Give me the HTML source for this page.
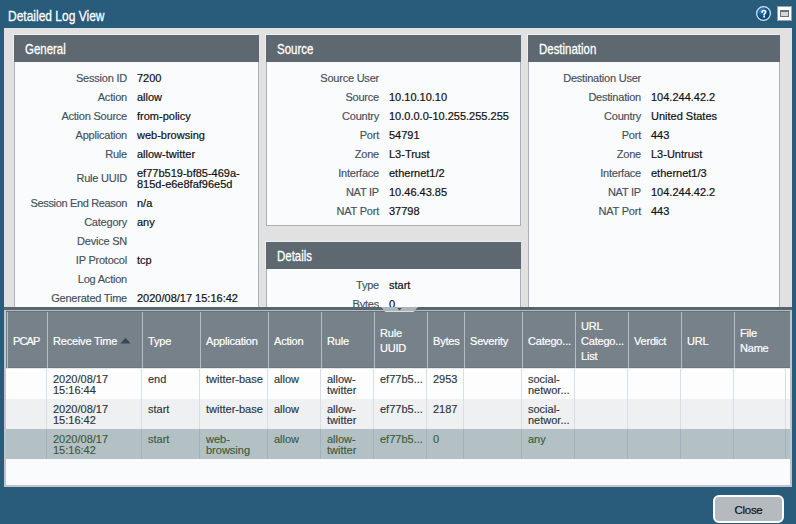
<!DOCTYPE html><html><head><meta charset="utf-8"><style>
*{box-sizing:border-box;margin:0;padding:0}
html,body{width:796px;height:524px;overflow:hidden}
body{background:#285c7a;font-family:"Liberation Sans",sans-serif;font-size:11px;position:relative}
.a{position:absolute;white-space:nowrap}
.title{position:absolute;left:8px;top:6px;color:#fff;font-size:15px;line-height:20px;transform:scaleX(0.8);transform-origin:0 0;white-space:nowrap;-webkit-text-stroke:0.3px #fff}
.content{position:absolute;left:4px;top:28px;width:788px;height:279px;background:#e1e1e1}
.ph{position:absolute;height:27px;background:#5d6870;box-shadow:-1px -1px 0 #efefef}
.ph span{position:absolute;left:11px;top:5px;color:#fff;font-size:14.5px;line-height:18px;transform:scaleX(0.79);transform-origin:0 0;white-space:nowrap;-webkit-text-stroke:0.3px #fff}
.pb{position:absolute;background:#fafbfd;border:1px solid #aab0b5;border-top:none}
.lb{position:absolute;text-align:right;color:#445059;-webkit-text-stroke:0.15px #445059;letter-spacing:-0.22px;line-height:13px;white-space:nowrap}
.vl{position:absolute;color:#111;-webkit-text-stroke:0.2px #111;line-height:13px;white-space:nowrap}
.vl2{position:absolute;color:#111;-webkit-text-stroke:0.2px #111;line-height:10.5px;white-space:nowrap}
.splitter{position:absolute;left:4px;top:307px;width:788px;height:3px;background:#58656d}
.grid{position:absolute;left:4px;top:310px;width:788px;height:177px;background:#fafbfd;border:2px solid #c1c5cb;border-top:1px solid #b7bcc4}
.th{position:absolute;top:312px;height:56px;color:#fff;border-left:1px solid #b6bcc3;line-height:15px;padding:2px 0 0 5px;letter-spacing:-0.2px;-webkit-text-stroke:0.2px #fff;display:flex;align-items:center;white-space:nowrap}
.thbg{position:absolute;left:6px;top:311px;width:784px;height:58px;background:#76818a;border-bottom:1px solid #e3e6e8;box-shadow:inset 0 -1px 0 #6c777f,inset 0 1px 0 #66727a}
.tr{position:absolute;left:6px;width:784px;height:30px}
.td{position:absolute;top:0;height:30px;border-left:1px solid #d9dee2;line-height:10.5px;padding:5px 0 0 6px;color:#2b363e;-webkit-text-stroke:0.15px currentColor;white-space:nowrap}
.sel .td{color:#3e5a3b;border-left-color:#9fb2bd}
.btn{position:absolute;left:713px;top:495px;width:71px;height:28px;border:2px solid #fff;border-radius:6px;background:#b5b9c0;color:#111;font-size:11.5px;text-align:center;line-height:24px;padding-top:1px;letter-spacing:-0.3px;-webkit-text-stroke:0.2px #111}
</style></head><body>
<div class="title">Detailed Log View</div>
<svg class="a" style="left:755px;top:5px" width="17" height="17" viewBox="0 0 17 17">
<defs><radialGradient id="hg" cx="0.35" cy="0.3" r="0.75"><stop offset="0" stop-color="#3a86bd"/><stop offset="0.55" stop-color="#0d5289"/><stop offset="1" stop-color="#063f6e"/></radialGradient></defs>
<circle cx="8.5" cy="8.5" r="6.9" fill="url(#hg)" stroke="#d6e2ef" stroke-width="1.3"/>
<path d="M7.1 7.2 C7.1 6.1 7.9 5.5 8.9 5.5 C9.9 5.5 10.7 6.2 10.7 7.1 C10.7 8.2 9.1 8.4 9.1 9.9" fill="none" stroke="#fff" stroke-width="1.6" stroke-linecap="round"/>
<circle cx="9.1" cy="11.7" r="0.95" fill="#fff"/></svg>
<div class="a" style="left:777px;top:6px;width:15px;height:15px;background:#fff;border:1px solid #9ba1a5"></div>
<div class="a" style="left:780px;top:10px;width:9px;height:7px;background:#d6d9db;border:1px solid #6a7378;border-top-width:2px"></div>
<div class="content"></div>
<div class="ph" style="left:14px;top:35px;width:245px"><span>General</span></div>
<div class="pb" style="left:14px;top:62px;width:245px;height:245px;border-bottom:none;"></div>
<div class="ph" style="left:266px;top:35px;width:255px"><span>Source</span></div>
<div class="pb" style="left:266px;top:62px;width:255px;height:164px;"></div>
<div class="ph" style="left:266px;top:242px;width:255px"><span>Details</span></div>
<div class="pb" style="left:266px;top:269px;width:255px;height:38px;border-bottom:none;"></div>
<div class="ph" style="left:528px;top:35px;width:252px"><span>Destination</span></div>
<div class="pb" style="left:528px;top:62px;width:252px;height:245px;border-bottom:none;"></div>
<div class="lb" style="left:14px;top:72px;width:113px;">Session ID</div>
<div class="vl" style="left:137px;top:72px">7200</div>
<div class="lb" style="left:14px;top:91px;width:113px;">Action</div>
<div class="vl" style="left:137px;top:91px">allow</div>
<div class="lb" style="left:14px;top:110px;width:113px;">Action Source</div>
<div class="vl" style="left:137px;top:110px">from-policy</div>
<div class="lb" style="left:14px;top:129px;width:113px;">Application</div>
<div class="vl" style="left:137px;top:129px">web-browsing</div>
<div class="lb" style="left:14px;top:148px;width:113px;">Rule</div>
<div class="vl" style="left:137px;top:148px">allow-twitter</div>
<div class="lb" style="left:14px;top:172px;width:113px;">Rule UUID</div>
<div class="vl2" style="left:137px;top:168px">ef77b519-bf85-469a-<br>815d-e6e8faf96e5d</div>
<div class="lb" style="left:14px;top:197px;width:113px;letter-spacing:-0.35px;">Session End Reason</div>
<div class="vl" style="left:137px;top:197px">n/a</div>
<div class="lb" style="left:14px;top:216px;width:113px;">Category</div>
<div class="vl" style="left:137px;top:216px">any</div>
<div class="lb" style="left:14px;top:235px;width:113px;">Device SN</div>
<div class="lb" style="left:14px;top:254px;width:113px;">IP Protocol</div>
<div class="vl" style="left:137px;top:254px">tcp</div>
<div class="lb" style="left:14px;top:273px;width:113px;">Log Action</div>
<div class="lb" style="left:14px;top:292px;width:113px;">Generated Time</div>
<div class="vl" style="left:137px;top:292px">2020/08/17 15:16:42</div>
<div class="lb" style="left:266px;top:72px;width:113px;">Source User</div>
<div class="lb" style="left:266px;top:91px;width:113px;">Source</div>
<div class="vl" style="left:389px;top:91px">10.10.10.10</div>
<div class="lb" style="left:266px;top:110px;width:113px;">Country</div>
<div class="vl" style="left:389px;top:110px">10.0.0.0-10.255.255.255</div>
<div class="lb" style="left:266px;top:129px;width:113px;">Port</div>
<div class="vl" style="left:389px;top:129px">54791</div>
<div class="lb" style="left:266px;top:148px;width:113px;">Zone</div>
<div class="vl" style="left:389px;top:148px">L3-Trust</div>
<div class="lb" style="left:266px;top:167px;width:113px;">Interface</div>
<div class="vl" style="left:389px;top:167px">ethernet1/2</div>
<div class="lb" style="left:266px;top:186px;width:113px;">NAT IP</div>
<div class="vl" style="left:389px;top:186px">10.46.43.85</div>
<div class="lb" style="left:266px;top:205px;width:113px;">NAT Port</div>
<div class="vl" style="left:389px;top:205px">37798</div>
<div class="lb" style="left:528px;top:72px;width:113px;">Destination User</div>
<div class="lb" style="left:528px;top:91px;width:113px;">Destination</div>
<div class="vl" style="left:651px;top:91px">104.244.42.2</div>
<div class="lb" style="left:528px;top:110px;width:113px;">Country</div>
<div class="vl" style="left:651px;top:110px">United States</div>
<div class="lb" style="left:528px;top:129px;width:113px;">Port</div>
<div class="vl" style="left:651px;top:129px">443</div>
<div class="lb" style="left:528px;top:148px;width:113px;">Zone</div>
<div class="vl" style="left:651px;top:148px">L3-Untrust</div>
<div class="lb" style="left:528px;top:167px;width:113px;">Interface</div>
<div class="vl" style="left:651px;top:167px">ethernet1/3</div>
<div class="lb" style="left:528px;top:186px;width:113px;">NAT IP</div>
<div class="vl" style="left:651px;top:186px">104.244.42.2</div>
<div class="lb" style="left:528px;top:205px;width:113px;">NAT Port</div>
<div class="vl" style="left:651px;top:205px">443</div>
<div class="lb" style="left:266px;top:279px;width:113px;">Type</div>
<div class="vl" style="left:389px;top:279px">start</div>
<div class="lb" style="left:266px;top:298px;width:113px;">Bytes</div>
<div class="vl" style="left:389px;top:298px">0</div>
<div class="splitter"></div>
<div class="grid"></div>
<div class="thbg"></div>
<div class="th" style="left:7px;width:40px"><span style="letter-spacing:-0.9px">PCAP</span></div>
<div class="th" style="left:47px;width:95px">Receive Time</div>
<div class="th" style="left:142px;width:58px">Type</div>
<div class="th" style="left:200px;width:68px">Application</div>
<div class="th" style="left:268px;width:53px">Action</div>
<div class="th" style="left:321px;width:53px">Rule</div>
<div class="th" style="left:374px;width:53px">Rule<br>UUID</div>
<div class="th" style="left:427px;width:37px">Bytes</div>
<div class="th" style="left:464px;width:58px">Severity</div>
<div class="th" style="left:522px;width:53px">Catego...</div>
<div class="th" style="left:575px;width:53px">URL<br>Catego...<br>List</div>
<div class="th" style="left:628px;width:53px">Verdict</div>
<div class="th" style="left:681px;width:53px">URL</div>
<div class="th" style="left:734px;width:52px">File<br>Name</div>
<div class="a " style="left:6px;top:369px;width:784px;height:30px;background:#fdfdfe">
<div class="td" style="left:0px;width:40px;border-left:none"></div>
<div class="td" style="left:40px;width:95px">2020/08/17<br>15:16:44</div>
<div class="td" style="left:135px;width:58px">end</div>
<div class="td" style="left:193px;width:68px">twitter-base</div>
<div class="td" style="left:261px;width:53px">allow</div>
<div class="td" style="left:314px;width:53px">allow-<br>twitter</div>
<div class="td" style="left:367px;width:53px">ef77b5...</div>
<div class="td" style="left:420px;width:37px">2953</div>
<div class="td" style="left:457px;width:58px"></div>
<div class="td" style="left:515px;width:53px">social-<br>networ...</div>
<div class="td" style="left:568px;width:53px"></div>
<div class="td" style="left:621px;width:53px"></div>
<div class="td" style="left:674px;width:53px"></div>
<div class="td" style="left:727px;width:52px"></div>
<div class="td" style="left:779px;width:4px"></div>
</div>
<div class="a " style="left:6px;top:399px;width:784px;height:30px;background:#eef0f1">
<div class="td" style="left:0px;width:40px;border-left:none"></div>
<div class="td" style="left:40px;width:95px">2020/08/17<br>15:16:42</div>
<div class="td" style="left:135px;width:58px">start</div>
<div class="td" style="left:193px;width:68px">twitter-base</div>
<div class="td" style="left:261px;width:53px">allow</div>
<div class="td" style="left:314px;width:53px">allow-<br>twitter</div>
<div class="td" style="left:367px;width:53px">ef77b5...</div>
<div class="td" style="left:420px;width:37px">2187</div>
<div class="td" style="left:457px;width:58px"></div>
<div class="td" style="left:515px;width:53px">social-<br>networ...</div>
<div class="td" style="left:568px;width:53px"></div>
<div class="td" style="left:621px;width:53px"></div>
<div class="td" style="left:674px;width:53px"></div>
<div class="td" style="left:727px;width:52px"></div>
<div class="td" style="left:779px;width:4px"></div>
</div>
<div class="a sel" style="left:6px;top:429px;width:784px;height:30px;background:#b3c1c5">
<div class="td" style="left:0px;width:40px;border-left:none"></div>
<div class="td" style="left:40px;width:95px">2020/08/17<br>15:16:42</div>
<div class="td" style="left:135px;width:58px">start</div>
<div class="td" style="left:193px;width:68px">web-<br>browsing</div>
<div class="td" style="left:261px;width:53px">allow</div>
<div class="td" style="left:314px;width:53px">allow-<br>twitter</div>
<div class="td" style="left:367px;width:53px">ef77b5...</div>
<div class="td" style="left:420px;width:37px">0</div>
<div class="td" style="left:457px;width:58px"></div>
<div class="td" style="left:515px;width:53px">any</div>
<div class="td" style="left:568px;width:53px"></div>
<div class="td" style="left:621px;width:53px"></div>
<div class="td" style="left:674px;width:53px"></div>
<div class="td" style="left:727px;width:52px"></div>
<div class="td" style="left:779px;width:4px"></div>
</div>
<svg class="a" style="left:120px;top:337px" width="11" height="7" viewBox="0 0 11 7"><path d="M0.5 6.5 L5.5 0.8 L10.5 6.5 Z" fill="#3b4850"/></svg>
<svg class="a" style="left:381px;top:307px" width="37" height="5" viewBox="0 0 37 5"><path d="M0 0 H37 L32.5 5 H4.5 Z" fill="#aeb5b9"/><path d="M3.6 4 H33.4 L32.5 5 H4.5 Z" fill="#dcdcdc"/><path d="M16.2 0.9 H20.8 L18.5 3.6 Z" fill="#47525a"/></svg>
<div class="btn">Close</div>
</body></html>
